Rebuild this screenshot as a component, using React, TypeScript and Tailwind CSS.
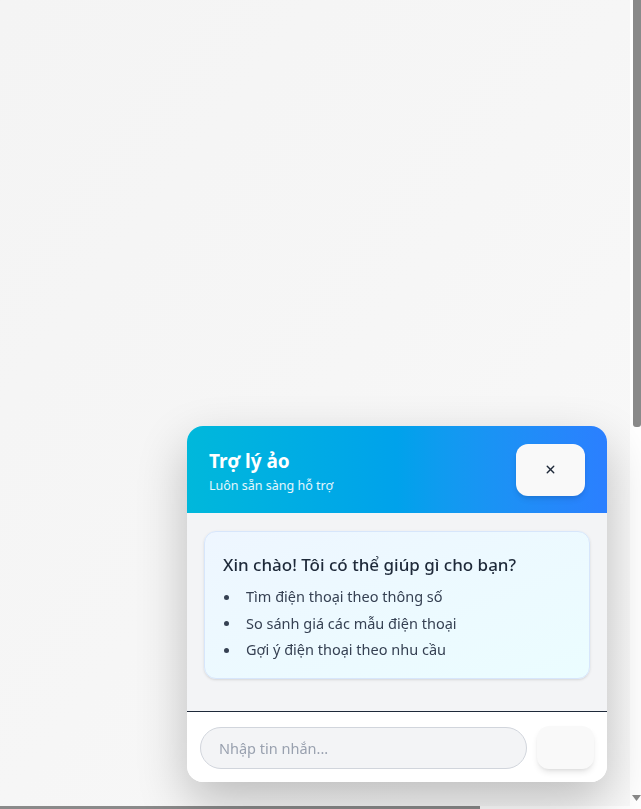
import { X } from 'lucide-react';

const suggestions = [
  'Tìm điện thoại theo thông số',
  'So sánh giá các mẫu điện thoại',
  'Gợi ý điện thoại theo nhu cầu',
];

const ChatWidget = () => {
  return (
    <div className="fixed bottom-[27px] right-[34px] w-[420px] rounded-2xl bg-white shadow-[0_20px_50px_rgba(0,0,0,0.24)] overflow-hidden">
      <div className="h-[87px] flex items-center justify-between px-[22px] bg-gradient-to-r from-[#00b8db] via-[#00a2eb] to-[#2b7fff]">
        <div className="flex flex-col pt-[4px]">
          <h2 className="text-white text-[19px] font-bold leading-[26px]">Trợ lý ảo</h2>
          <p className="text-white/90 text-[12.5px] leading-[18px] mt-[3px]">Luôn sẵn sàng hỗ trợ</p>
        </div>
        <button className="w-[69px] h-[52px] rounded-xl bg-[#f9f9f9] shadow-md flex items-center justify-center text-gray-800">
          <X size={13} strokeWidth={2.5} />
        </button>
      </div>

      <div className="h-[198px] bg-[#f3f4f6] px-[17px] pt-[18px]">
        <div className="rounded-xl border border-[#d7e6fb] bg-gradient-to-br from-[#eef6ff] to-[#ebfdff] shadow-sm px-[18px] pt-[20px] pb-[14px]">
          <h3 className="text-[17px] font-medium text-gray-800 leading-[26px] mb-[6px]">
            Xin chào! Tôi có thể giúp gì cho bạn?
          </h3>
          <ul className="flex flex-col">
            {suggestions.map((s) => (
              <li key={s} className="flex items-center h-[26.5px] text-[14.5px] text-gray-700">
                <span className="w-[5px] h-[5px] rounded-full bg-gray-700 ml-[1px] mr-[17px]" />
                {s}
              </li>
            ))}
          </ul>
        </div>
      </div>

      <div className="border-t border-gray-800 bg-white flex items-center gap-[10px] px-[13px] pt-[14px] pb-[13px]">
        <input
          placeholder="Nhập tin nhắn..."
          className="flex-1 h-[42px] rounded-full bg-gray-100 border border-gray-300 px-[18px] text-[14.5px] text-gray-800 placeholder:text-gray-400 outline-none"
        />
        <button className="w-[57px] h-[43px] rounded-xl bg-[#f9f9f9] shadow-md" />
      </div>
    </div>
  );
};

export default function App() {
  return (
    <div className="h-screen w-full flex bg-white font-['Noto_Sans',sans-serif]">
      <div className="flex-1 flex flex-col">
        <main className="flex-1 bg-gradient-to-br from-[#f4f4f4] via-[#f6f6f6] to-[#f9f9f9]" />
        {/* horizontal scrollbar */}
        <div className="h-[3px] bg-white">
          <div className="w-[480px] h-full bg-[#8a8a8a]" />
        </div>
      </div>
      {/* vertical scrollbar */}
      <div className="w-[11px] bg-white flex flex-col items-end pb-[8px]">
        <div className="w-[8px] h-[427px] bg-[#8a8a8a] rounded-b-[3px]" />
        <div className="flex-1" />
        <svg width="9" height="6" viewBox="0 0 9 6">
          <polygon points="0,0 9,0 4.5,6" fill="#8a8a8a" />
        </svg>
      </div>
      <ChatWidget />
    </div>
  );
}
